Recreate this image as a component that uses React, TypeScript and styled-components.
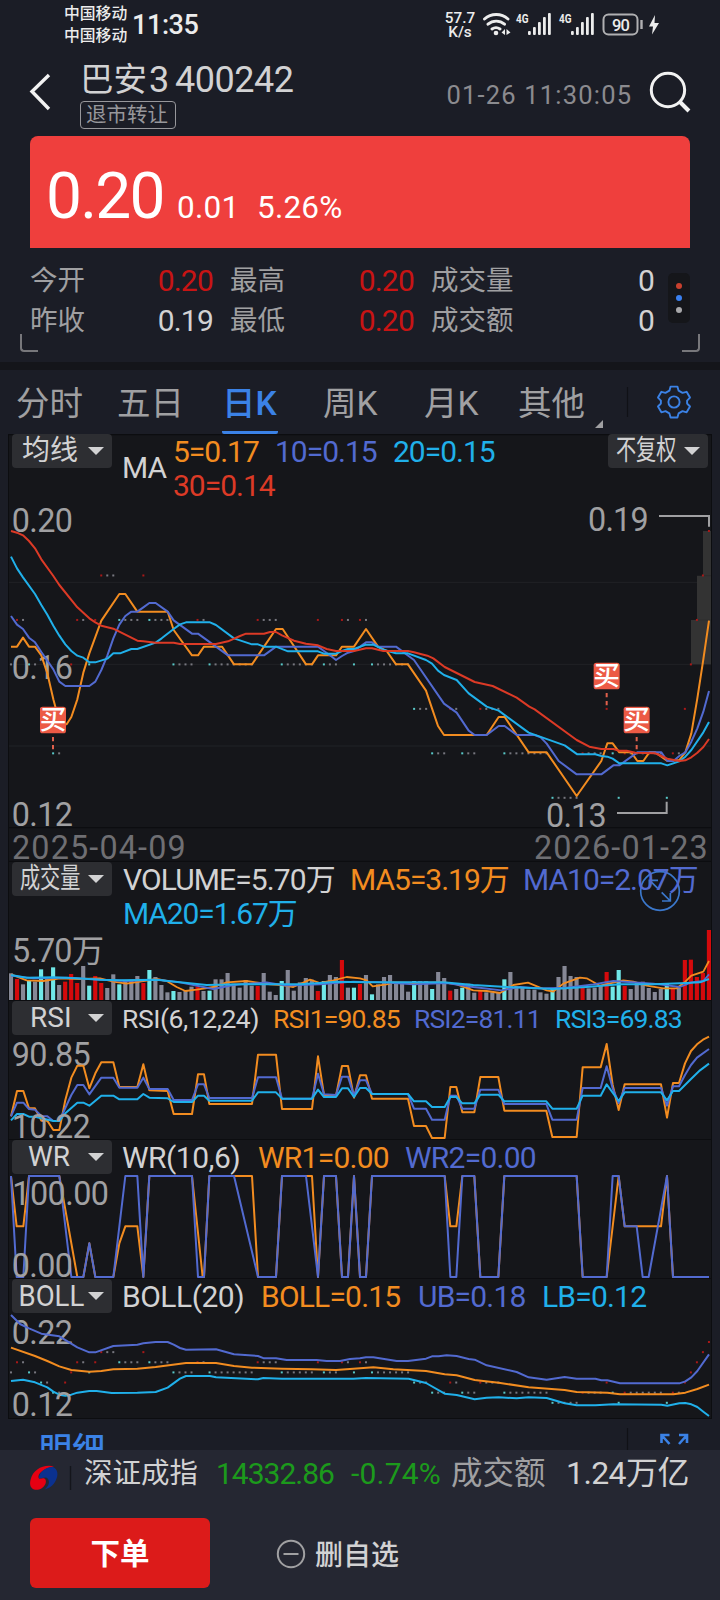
import React from 'react';
import styled, { createGlobalStyle } from 'styled-components';

const FONT = "Roboto, 'Noto Sans CJK SC', sans-serif";
const C = {
  page: '#1b1d26',
  panel: '#15161a',
  line: '#0c0d10',
  grid: '#212226',
  text: '#d2d2d3',
  muted: '#a0a0a2',
  dim: '#6f6f73',
  orange: '#f28c20',
  indigo: '#526ad0',
  cyan: '#20b0ea',
  red: '#dc3a26',
  blue: '#3b82e6',
};

const Global = createGlobalStyle`
  body { margin: 0; background: ${C.page}; }
  * { box-sizing: border-box; }
`;

const Screen = styled.div`
  width: 720px;
  height: 1600px;
  overflow: hidden;
  display: flex;
  flex-direction: column;
  background: ${C.page};
  color: ${C.text};
  font-family: ${FONT};
  white-space: nowrap;
`;

/* A run of text with its own size, tracking and reserved width */
const Txt = styled.span<{ $s: number; $c?: string; $ls?: number; $w?: number; $b?: number }>`
  flex: none;
  display: block;
  font-size: ${p => p.$s}px;
  color: ${p => p.$c ?? 'inherit'};
  letter-spacing: ${p => p.$ls ?? 0}px;
  font-weight: ${p => p.$b ?? 400};
  ${p => (p.$w ? `width: ${p.$w}px;` : '')}
`;

/* ---------- status bar ---------- */
const StatusBar = styled.div`
  height: 60px;
  padding: 0 60px 10px 64px;
  display: flex;
  align-items: center;
  color: #ececec;
`;
const Stack = styled.div<{ $lh: number; $w: number; $align?: string }>`
  display: flex;
  flex-direction: column;
  align-items: ${p => p.$align ?? 'flex-start'};
  width: ${p => p.$w}px;
  line-height: ${p => p.$lh}px;
`;
const StatusIcons = styled.svg`
  display: block;
  margin-left: 7px;
`;

/* ---------- header ---------- */
const Header = styled.header`
  height: 76px;
  padding: 0 29px;
  display: flex;
  align-items: flex-start;
`;
const TitleBlock = styled.div`
  margin-left: 27px;
  width: 367px;
  display: flex;
  flex-direction: column;
  align-items: flex-start;
`;
const TitleLine = styled.div`
  display: flex;
  height: 41px;
  line-height: 40px;
`;
const Badge = styled.div`
  width: 96px;
  height: 28px;
  border: 1px solid #97979b;
  border-radius: 4px;
  color: #97979b;
  font-size: 20.5px;
  line-height: 26px;
  padding-left: 5px;
`;
const TimeStamp = styled.div`
  line-height: 30px;
  margin-top: 20px;
  width: 203px;
`;

/* ---------- quote ---------- */
const QuoteCard = styled.section`
  margin: 0 30px;
  height: 112px;
  padding-left: 16px;
  border-radius: 8px 8px 0 0;
  background: #ef3f3d;
  color: #fff;
  display: flex;
  align-items: baseline;
  line-height: 122px;
`;
const Stats = styled.section`
  position: relative;
  height: 114px;
  padding: 13px 30px 0;
  display: flex;
`;
const StatGrid = styled.div`
  display: grid;
  grid-template-columns: 92px 92px 16px 93px 92px 16px 112px 112px;
  grid-auto-rows: 40px;
  line-height: 40px;
  color: ${C.muted};
`;
const StatValue = styled.span<{ $c?: string }>`
  text-align: right;
  font-size: 30px;
  letter-spacing: -0.8px;
  padding-right: 1px;
  color: ${p => p.$c ?? C.text};
`;
const StatLabel = styled.span`
  font-size: 27.5px;
`;
const DotMenu = styled.div`
  width: 22px;
  height: 50px;
  margin: 12px 0 0 13px;
  border-radius: 5px;
  background: #15161a;
  display: flex;
  flex-direction: column;
  align-items: center;
  justify-content: center;
  gap: 6px;
`;
const Dot = styled.i<{ $c: string }>`
  width: 6px;
  height: 6px;
  border-radius: 50%;
  background: ${p => p.$c};
`;
const Corner = styled.i<{ $side: 'left' | 'right' }>`
  position: absolute;
  bottom: 10px;
  ${p => p.$side}: 20px;
  width: 18px;
  height: 18px;
  border: 0 solid #77777b;
  border-bottom-width: 2px;
  border-${p => p.$side}-width: 2px;
  border-bottom-${p => p.$side}-radius: 4px;
`;
const Band = styled.div`
  height: 8px;
  flex: none;
  background: #14151a;
`;

/* ---------- tabs ---------- */
const Tabs = styled.nav`
  height: 64px;
  display: flex;
  padding-left: 16px;
  line-height: 67px;
  font-size: 33.5px;
  color: ${C.muted};
`;
const Tab = styled.div<{ $w: number; $on?: boolean }>`
  width: ${p => p.$w}px;
  flex: none;
  color: ${p => (p.$on ? C.blue : 'inherit')};
  font-weight: ${p => (p.$on ? 500 : 400)};
`;
const TabMark = styled.span`
  display: block;
  width: 56px;
  height: 64px;
  border-bottom: 3px solid ${C.blue};
  border-radius: 2px;
`;
const TabTools = styled.svg`
  display: block;
  flex: none;
`;

/* ---------- chart panes ---------- */
const Panel = styled.main`
  margin: 0 8px;
  border: 1px solid ${C.line};
  border-top: 0;
  background: ${C.panel};
  height: 985px;
  flex: none;
`;
const Pane = styled.section<{ $h: number }>`
  display: grid;
  height: ${p => p.$h}px;
  > * { grid-area: 1 / 1; }
`;
const Plot = styled.svg`
  display: block;
  width: 702px;
  height: 100%;
`;
const PaneHead = styled.div`
  z-index: 1;
  height: 68px;
  padding: 0 3px;
  display: flex;
  align-items: flex-start;
`;
const Pill = styled.button`
  flex: none;
  width: 100px;
  height: 34px;
  padding: 0;
  border: 0;
  border-radius: 4px;
  background: #2d2e32;
  color: ${C.text};
  font-family: inherit;
  line-height: 34px;
  display: flex;
  align-items: center;
`;
const PillText = styled.span<{ $x: number; $l: number; $s?: number }>`
  display: block;
  width: 76px;
  flex: none;
  padding-left: ${p => p.$l}px;
  text-align: left;
  font-size: ${p => p.$s ?? 28}px;
  line-height: 34px;
  transform: scaleX(${p => p.$x});
  transform-origin: left center;
`;
const Caret = styled.i`
  border: 8px solid transparent;
  border-top: 8px solid ${C.text};
  border-bottom: 0;
`;
const Readouts = styled.div<{ $l: number; $w: number; $t?: number }>`
  margin-left: ${p => p.$l}px;
  width: ${p => p.$w}px;
  flex: none;
  padding-top: ${p => p.$t ?? 1}px;
  display: flex;
  flex-wrap: wrap;
  line-height: 34px;
`;
const Spacer = styled.div`
  flex: 1;
`;

const STEP = 18.05;
const bx = (i: number) => 33 + STEP * i;
const TONE: Record<string, string> = { r: '#a81818', g: '#77777f', t: '#58c8c8' };
const BAR: Record<string, string> = { r: '#d40a0c', g: '#868896', t: '#70e8e8' };

/* closing levels: price level, first bar, tone of each bar in the run */
const CLOSES: [number, number, string][] = [
  [0, 116, 'r'], [1, 15, 'rgg'], [1, 22, 'r'], [1, 115, 'r'],
  [2, 1, 'rg'], [2, 11, 'rg'], [2, 14, 'r'], [2, 18, 'tggg'], [2, 23, 'tggg'], [2, 31, 'rg'], [2, 41, 'rggg'],
  [2, 51, 'r'], [2, 55, 'rg'], [2, 58, 'rg'], [2, 114, 'r'],
  [3, 0, 'g'], [3, 3, 'tg'], [3, 10, 'r'], [3, 13, 't'], [3, 27, 'tggg'], [3, 33, 'tggggggg'], [3, 45, 'tggggg'],
  [3, 52, 'tgg'], [3, 57, 't'], [3, 60, 'tgggggg'], [3, 113, 'r'],
  [4, 5, 'tg'], [4, 9, 'r'], [4, 67, 'tgg'], [4, 73, 'rg'], [4, 78, 'rggg'], [4, 99, 'r'], [4, 112, 'r'],
  [5, 7, 'tg'], [5, 70, 'tgg'], [5, 75, 'tgg'], [5, 82, 'tggggggg'], [5, 95, 'rggg'], [5, 100, 't'],
  [5, 102, 'rgggggg'], [5, 110, 'rg'],
  [6, 90, 'tgggg'], [6, 101, 't'], [6, 109, 't'],
];
const Closes = ({ top, step }: { top: number; step: number }) => (
  <g>
    {CLOSES.flatMap(([lv, s, run]) =>
      run.split('').map((t, k) => (
        <rect key={`${lv}-${s + k}`} x={bx(s + k) - 3} y={top + lv * step - 3} width={6} height={6} fill={TONE[t]} />
      )),
    )}
  </g>
);

const VOLUME =
  'g355 r372 g388 t375 g380 t343 g372 t337 g390 r380 r357 r384 g333 t392 r363 r384 g399 g358 t388 g376 g375 g363 r384 t345 g366 g390 g412 t408 g411 g405 g395 r395 g408 t407 g373 g373 g354 g386 g398 g375 g392 r393 g354 g410 g420 t378 g345 g407 g382 g369 g374 r408 t378 g360 g366 r315 g398 t398 r387 g360 t418 g388 g366 g360 g385 g386 g410 t378 g378 g378 t402 g351 g369 r407 g402 t398 g386 g413 r408 g412 g412 g412 t373 g351 g393 g396 g404 g404 g412 g416 t402 g366 g333 g363 g366 r398 g400 g398 g391 r351 t395 t345 r393 g402 g382 g380 g399 g411 g402 t387 r400 g398 r315 r314 r366 r354 r225'.split(' ');

const Line = ({ c, d, w = 6 }: { c: string; d: string; w?: number }) => (
  <polyline points={d} fill="none" stroke={c} strokeWidth={w} strokeLinejoin="round" />
);
const T = ({ x, y, w, c = C.muted, children }: { x: number; y: number; w: number; c?: string; children: string }) => (
  <text x={x} y={y} textLength={w} fill={c} fontSize={97} fontFamily={FONT}>{children}</text>
);
const Buy = ({ x, y }: { x: number; y: number }) => (
  <g>
    <path d={`M${x} ${y + 91}v38`} stroke="#e0604c" strokeWidth={6} strokeDasharray="13 11" />
    <rect x={x - 39} y={y} width={78} height={80} rx={8} fill="#ec5a45" />
    <text x={x} y={y + 68} textAnchor="middle" fontSize={80} fontWeight={500} fill="#fff" fontFamily={FONT}>买</text>
  </g>
);

const MainPlot = () => (
  <Plot viewBox="27 -198 2106 1284">
    <path d="M27 247H2133M27 493H2133M27 738H2133" stroke={C.grid} strokeWidth={3} />
    <path d="M27 -196H2133M27 983H2133M27 1084H2133" stroke={C.line} strokeWidth={4} />
    <path d="M2073 360h18V227h18V93h27v400h-63z" fill="#333333" />
    <path d="M2109 227h27M2091 360h45" stroke="#2b2b2b" strokeWidth={2} />
    <Closes top={93} step={133.4} />
    <T x={35} y={95} w={184}>0.20</T>
    <T x={35} y={536} w={184}>0.16</T>
    <T x={35} y={977} w={184}>0.12</T>
    <Line c={C.orange} d="33,440 51,440 69,413 87,440 105,440 124,466 142,520 160,598 178,665 200,673 214,651 232,598 250,518 268,460 304,362 358,282 376,282 412,335 503,335 521,390 576,466 594,466 612,440 666,440 702,493 756,493 828,387 848,387 918,493 936,493 954,466 1008,466 1026,440 1062,440 1098,387 1134,440 1160,453 1188,493 1224,493 1278,572 1296,625 1314,678 1332,705 1460,705 1496,651 1514,651 1586,757 1640,757 1730,888 1804,783 1822,730 1838,730 1858,757 1894,757 1912,783 1930,783 1948,757 1966,757 2002,783 2038,780 2056,757 2074,700 2092,595 2110,478 2127,362" />
    <Line c={C.indigo} d="33,348 51,374 69,387 87,413 105,427 124,456 160,508 178,545 196,558 268,558 286,545 304,510 322,467 340,415 358,374 376,348 394,335 412,335 430,322 448,309 467,309 503,335 521,361 576,401 594,401 684,466 792,466 828,440 954,440 972,453 990,466 1008,480 1026,468 1044,458 1062,453 1098,427 1116,427 1134,440 1188,440 1242,480 1332,611 1370,638 1406,692 1424,705 1460,705 1496,678 1514,678 1550,705 1604,705 1622,712 1640,731 1676,783 1730,823 1804,823 1840,796 1858,796 1912,757 1984,757 2002,783 2020,783 2038,768 2056,757 2074,725 2092,685 2110,635 2127,573" />
    <Line c={C.cyan} d="33,170 51,205 69,232 105,282 124,315 142,344 160,377 178,407 196,433 214,453 232,467 250,473 268,487 286,487 322,476 340,460 360,460 394,447 412,447 467,428 485,415 521,387 540,373 558,367 630,367 648,375 702,415 756,433 774,433 792,440 828,440 864,454 954,454 972,461 1008,461 1026,453 1044,447 1062,447 1098,434 1120,434 1150,449 1188,460 1224,460 1278,480 1296,491 1314,512 1332,525 1370,540 1406,580 1460,620 1496,632 1586,698 1694,736 1732,763 1786,763 1804,768 1822,770 1838,776 1858,790 1984,790 2002,796 2038,784 2056,770 2074,750 2110,697 2127,666" />
    <Line c={C.red} d="33,93 51,98 69,106 87,123 105,145 124,178 160,228 178,255 232,322 250,338 268,355 286,367 304,377 340,386 412,422 430,424 467,428 521,428 540,432 648,432 684,424 720,408 738,401 792,401 810,396 828,396 846,406 882,422 918,431 954,436 980,447 1008,453 1062,453 1098,445 1116,445 1150,453 1224,453 1242,457 1282,467 1300,475 1334,501 1424,546 1478,558 1550,593 1588,620 1604,628 1730,720 1768,740 1804,747 1840,747 1858,752 1880,752 1906,758 1966,760 1984,768 2002,776 2038,783 2056,781 2074,772 2092,758 2110,741 2127,717" />
    <Buy x={159} y={620} />
    <Buy x={1820} y={488} />
    <Buy x={1910} y={620} />
    <path d="M1977 48H2127V80M1851 939H2000V905" fill="none" stroke={C.muted} strokeWidth={6} />
    <T x={1764} y={92} w={182}>0.19</T>
    <T x={1638} y={980} w={182}>0.13</T>
    <T x={36} y={1076} w={521} c={C.dim}>2025-04-09</T>
    <T x={1602} y={1076} w={521} c={C.dim}>2026-01-23</T>
  </Plot>
);

const VolumePlot = () => (
  <Plot viewBox="27 21 2106 417">
    {VOLUME.map((b, i) => (
      <rect key={i} x={bx(i) - 6.2} y={+b.slice(1)} width={12.4} height={435 - +b.slice(1)} fill={BAR[b[0]]} />
    ))}
    <Line c={C.orange} w={5.4} d="33,358 80,376 130,378 180,370 240,372 300,370 340,380 380,386 430,378 470,372 500,378 530,396 556,408 590,404 640,396 680,382 740,378 780,384 810,388 846,390 880,396 930,374 960,384 1000,376 1040,366 1080,370 1100,376 1118,394 1160,388 1180,382 1240,384 1330,382 1370,388 1420,406 1460,408 1500,414 1540,390 1584,383 1640,406 1660,410 1690,386 1740,368 1760,370 1800,392 1870,376 1900,380 1940,392 1990,400 2030,400 2056,380 2074,362 2110,350 2127,318" />
    <Line c={C.indigo} w={5.4} d="33,362 100,370 200,368 300,374 380,378 470,374 540,382 640,402 700,390 800,382 860,392 960,388 1060,380 1150,382 1240,388 1340,384 1420,396 1504,406 1560,396 1620,400 1700,398 1780,388 1840,378 1960,386 2040,396 2074,382 2110,378 2127,358" />
    <Line c={C.cyan} d="33,360 80,368 160,367 230,370 300,374 360,376 470,374 540,382 620,390 720,388 820,388 900,388 960,384 1010,380 1100,382 1240,382 1330,382 1420,390 1520,396 1660,402 1760,396 1860,388 1960,388 2060,384 2100,382 2127,372" />
    <T x={36} y={320} w={276}>5.70万</T>
    <g fill="none" stroke="#3b78cc" strokeWidth={5}>
      <circle cx={1980} cy={108} r={58} />
      <path d="M1974 101L1949 76M1948 98V76H1974M1985 112L2011 138M1986 138H2011V114" />
    </g>
    <path d="M27 437H2133" stroke={C.line} strokeWidth={4} />
  </Plot>
);

const RsiPlot = () => (
  <Plot viewBox="27 438 2106 417">
    <T x={35} y={632} w={237}>90.85</T>
    <Line c={C.orange} d="33,784 51,708 70,708 87,760 105,760 124,797 142,797 160,825 178,825 196,735 214,668 232,632 250,632 268,700 286,655 304,622 340,622 358,696 412,696 430,628 448,706 503,708 521,777 576,777 594,658 612,658 628,747 756,747 774,599 828,599 846,762 936,762 954,604 972,720 1008,722 1026,633 1044,633 1062,728 1080,661 1098,661 1116,731 1224,731 1242,813 1278,813 1296,849 1334,849 1351,696 1369,696 1387,772 1423,772 1441,666 1495,666 1513,767 1639,767 1657,846 1730,846 1748,637 1802,637 1820,567 1838,690 1856,765 1874,688 1983,688 2001,788 2019,684 2037,684 2055,625 2073,588 2091,568 2109,554 2127,545" />
    <Line c={C.indigo} d="33,784 51,743 70,743 87,762 105,764 124,783 142,784 160,798 178,798 214,720 232,690 250,690 268,718 304,668 340,668 358,698 412,698 430,668 448,702 503,702 521,735 576,735 594,688 612,688 628,729 756,729 774,667 828,667 846,731 936,731 954,656 972,718 1008,720 1026,665 1044,665 1062,722 1080,676 1098,676 1116,717 1224,717 1242,761 1278,761 1296,794 1334,794 1351,722 1369,722 1387,761 1423,761 1441,704 1495,704 1513,747 1639,747 1657,794 1730,794 1748,699 1802,699 1820,634 1838,700 1856,744 1874,699 1983,699 2001,752 2019,694 2037,694 2055,660 2073,630 2091,608 2127,582" />
    <Line c={C.cyan} d="33,796 51,777 70,777 87,785 105,785 160,798 178,798 196,775 232,743 250,743 268,752 304,722 340,722 358,733 412,733 430,717 448,728 503,730 521,741 576,741 594,722 612,722 628,737 756,737 774,712 828,712 846,731 936,731 954,704 972,726 1008,726 1026,700 1044,700 1062,726 1080,699 1098,699 1116,717 1224,717 1242,739 1278,739 1296,756 1334,756 1351,726 1369,726 1387,745 1423,745 1441,719 1495,719 1513,739 1639,739 1657,761 1730,761 1748,722 1802,722 1820,688 1856,738 1874,712 1983,712 2001,736 2019,708 2037,708 2073,672 2100,646 2127,626" />
    <T x={35} y={849} w={237}>10.22</T>
    <path d="M27 854H2133" stroke={C.line} strokeWidth={4} />
  </Plot>
);

const WrPlot = () => (
  <Plot viewBox="27 15 2106 417">
    <Line c={C.orange} d="33,123 50,274 70,274 87,123 178,123 232,426 250,426 268,325 286,426 340,426 358,325 376,274 412,274 430,426 448,123 576,123 608,426 612,426 628,123 756,123 774,426 828,426 846,123 936,123 954,426 972,123 1008,123 1026,426 1044,426 1062,123 1080,426 1098,426 1116,123 1334,123 1351,274 1369,274 1387,123 1423,123 1441,426 1495,426 1513,123 1730,123 1748,426 1820,426 1856,123 1874,274 1983,274 2001,123 2019,426 2127,426" />
    <Line c={C.indigo} d="33,123 50,426 70,426 87,123 178,123 214,426 250,426 268,325 286,426 340,426 376,123 412,123 430,426 448,123 576,123 594,426 612,426 628,123 702,123 774,426 828,426 846,123 918,123 954,426 972,123 1008,123 1026,426 1044,426 1062,123 1080,426 1098,426 1116,123 1334,123 1351,426 1369,426 1387,123 1423,123 1441,426 1495,426 1513,123 1730,123 1748,426 1820,426 1838,123 1856,123 1874,274 1910,274 1928,426 1946,426 2001,123 2019,426 2127,426" />
    <T x={37} y={210} w={290}>100.00</T>
    <T x={35} y={426} w={184}>0.00</T>
    <path d="M27 431H2133" stroke={C.line} strokeWidth={3} />
  </Plot>
);

const BollPlot = () => (
  <Plot viewBox="27 432 2106 417">
    <T x={35} y={627} w={184}>0.22</T>
    <Closes top={621} step={30.4} />
    <Line c={C.indigo} d="33,540 60,567 87,580 124,596 178,604 232,637 268,652 286,652 340,633 412,629 430,625 467,621 503,621 521,629 540,639 558,644 648,643 702,658 774,663 792,670 828,670 860,675 950,675 980,678 1020,678 1050,672 1080,670 1098,667 1120,667 1190,678 1224,678 1278,671 1296,664 1316,664 1340,661 1370,663 1406,672 1424,674 1460,691 1550,711 1586,727 1640,734 1694,726 1730,731 1786,731 1804,736 1822,736 1860,745 2038,745 2056,739 2074,727 2092,708 2127,658" />
    <Line c={C.orange} d="33,638 105,663 142,678 178,694 214,705 268,710 304,708 340,703 412,701 467,696 558,684 648,684 702,693 756,698 846,701 936,703 1008,705 1060,701 1120,697 1180,703 1278,708 1334,718 1370,721 1424,735 1496,743 1586,757 1694,765 1730,771 1822,773 1860,778 2020,778 2056,773 2092,762 2127,749" />
    <Line c={C.cyan} d="33,738 69,734 105,742 142,757 160,770 178,779 196,782 214,779 232,773 268,768 290,768 335,774 412,773 467,771 503,758 540,731 558,723 630,723 648,727 774,733 790,729 846,731 1060,731 1098,729 1226,731 1278,744 1334,776 1370,780 1424,793 1460,788 1496,787 1550,790 1586,787 1640,789 1694,805 1730,811 1786,811 1840,808 1984,809 2002,812 2038,805 2056,804 2074,808 2092,816 2110,830 2127,843" />
    <T x={35} y={843} w={184}>0.12</T>
  </Plot>
);

/* ---------- footer ---------- */
const Details = styled.div`
  height: 31px;
  flex: none;
  overflow: hidden;
  padding: 10px 29px 0 39px;
  display: flex;
  justify-content: space-between;
  color: ${C.blue};
  line-height: 41px;
`;
const ExpandIcon = styled.svg`
  display: block;
  flex: none;
  margin-top: -1px;
`;
const Footer = styled.footer`
  height: 150px;
  flex: none;
  background: #252732;
`;
const IndexRow = styled.div`
  height: 68px;
  padding-left: 30px;
  display: flex;
  line-height: 47px;
`;
const IndexMark = styled.svg`
  display: block;
  flex: none;
`;
const Actions = styled.div`
  padding-left: 30px;
  display: flex;
  align-items: center;
  height: 70px;
`;
const OrderButton = styled.button`
  width: 180px;
  height: 70px;
  padding: 2px 0 0;
  border: 0;
  border-radius: 6px;
  background: #dc1b1a;
  color: #fff;
  font: 700 29.5px/68px ${FONT};
`;

export default function App() {
  return (
    <Screen>
      <Global />
      <StatusBar>
        <Stack $lh={22} $w={68}>
          <Txt $s={15.8} $b={500}>中国移动</Txt>
          <Txt $s={15.8} $b={500}>中国移动</Txt>
        </Stack>
        <Txt $s={27} $b={500} $ls={-0.4}>11:35</Txt>
        <Spacer />
        <Stack $lh={14} $w={30} $align="center">
          <Txt $s={15.3} $b={500}>57.7</Txt>
          <Txt $s={15.3} $b={500}>K/s</Txt>
        </Stack>
        <StatusIcons width={178} height={30} viewBox="482 10 178 30">
          <g fill="none" stroke="#ececec" strokeWidth={2.9} strokeLinecap="round">
            <path d="M484.500 19a17.500 17.500 0 0 1 23.500 0M488 24.200a12.500 12.500 0 0 1 16.500 0M492 29a7 7 0 0 1 8 0" />
          </g>
          <circle cx={496} cy={33} r={2.300} fill="#ececec" />
          <path d="M501.500 32.500l3.500-3.500v6zM510.500 32.500l-4-3.500v6z" fill="#ececec" />
          {[516, 559].map(x => (
            <g key={x} fill="#ececec">
              <text x={x} y={23} fontSize={13} fontWeight={700} textLength={12.500} lengthAdjust="spacingAndGlyphs" fontFamily={FONT}>4G</text>
              <rect x={x + 12} y={31} width={2.800} height={4} rx={1} />
              <rect x={x + 17} y={27} width={2.800} height={8} rx={1} />
              <rect x={x + 22} y={22} width={2.800} height={13} rx={1} />
              <rect x={x + 27} y={17} width={2.800} height={18} rx={1} />
              <rect x={x + 32} y={13} width={2.800} height={22} rx={1} />
            </g>
          ))}
          <rect x={603.500} y={14.500} width={34} height={20} rx={5} fill="none" stroke="#b0b0b2" strokeWidth={2} />
          <path d="M641.500 20v9" stroke="#b0b0b2" strokeWidth={2.400} />
          <text x={612} y={30.500} fontSize={16.500} fontWeight={500} fill="#ececec" textLength={18} fontFamily={FONT}>90</text>
          <path d="M655 15l-6 11.500h4l-1 8 7-11.500h-4.500z" fill="#ececec" />
        </StatusIcons>
      </StatusBar>

      <Header>
        <svg width={24} height={60} viewBox="29 60 24 60">
          <path d="M49 75L32 91.500L49 109" fill="none" stroke="#f2f2f2" strokeWidth={3.400} />
        </svg>
        <TitleBlock>
          <TitleLine>
            <Txt $s={33.5} $w={69}>巴安</Txt>
            <Txt $s={36} $w={26}>3</Txt>
            <Txt $s={36} $ls={-0.5}>400242</Txt>
          </TitleLine>
          <Badge>退市转让</Badge>
        </TitleBlock>
        <TimeStamp><Txt $s={25.5} $c="#8b8b8f" $ls={1.2}>01-26 11:30:05</Txt></TimeStamp>
        <svg width={42} height={60} viewBox="649 60 42 60">
          <circle cx={668} cy={90} r={16.700} fill="none" stroke="#f2f2f2" strokeWidth={3} />
          <path d="M679.500 101.500l9.500 9.500" stroke="#f2f2f2" strokeWidth={4} />
        </svg>
      </Header>

      <QuoteCard>
        <Txt $s={64} $ls={-1.8} $w={131}>0.20</Txt>
        <Txt $s={31.5} $ls={0.3} $w={80}>0.01</Txt>
        <Txt $s={31.5} $ls={0.2}>5.26%</Txt>
      </QuoteCard>
      <Stats>
        <StatGrid>
          <StatLabel>今开</StatLabel><StatValue $c="#c81414">0.20</StatValue><i />
          <StatLabel>最高</StatLabel><StatValue $c="#c81414">0.20</StatValue><i />
          <StatLabel>成交量</StatLabel><StatValue>0</StatValue>
          <StatLabel>昨收</StatLabel><StatValue>0.19</StatValue><i />
          <StatLabel>最低</StatLabel><StatValue $c="#c81414">0.20</StatValue><i />
          <StatLabel>成交额</StatLabel><StatValue>0</StatValue>
        </StatGrid>
        <DotMenu>
          <Dot $c="#c8402e" />
          <Dot $c="#3a80f0" />
          <Dot $c="#a8a8aa" />
        </DotMenu>
        <Corner $side="left" />
        <Corner $side="right" />
      </Stats>
      <Band />

      <Tabs>
        <Tab $w={101}>分时</Tab>
        <Tab $w={105}>五日</Tab>
        <Tab $w={101} $on><TabMark>日K</TabMark></Tab>
        <Tab $w={101}>周K</Tab>
        <Tab $w={94}>月K</Tab>
        <Tab $w={74}>其他</Tab>
        <TabTools width={118} height={64} viewBox="592 370 118 64">
          <path d="M603 420v8h-8z" fill={C.muted} />
          <path d="M627.500 387v30" stroke="#101116" strokeWidth={1.200} />
          <g fill="none" stroke={C.blue} strokeWidth={1.900} strokeLinejoin="round">
            <circle cx={674} cy={402} r={5.600} />
            <path d="M670.600 386.600h6.800l1.200 4.100 3.900 2.200 4.100-1.100 3.400 5.800-2.900 3v2.900l2.900 3-3.400 5.800-4.100-1.100-3.900 2.200-1.200 4.100h-6.800l-1.200-4.100-3.900-2.200-4.100 1.100-3.400-5.800 2.900-3v-2.900l-2.900-3 3.400-5.800 4.100 1.100 3.900-2.200z" />
          </g>
        </TabTools>
      </Tabs>

      <Panel>
        <Pane $h={428}>
          <MainPlot />
          <PaneHead>
            <Pill><PillText $l={10} $x={1}>均线</PillText><Caret /></Pill>
            <Readouts $l={10} $w={51} $t={17}><Txt $s={30} $ls={-1}>MA</Txt></Readouts>
            <Readouts $l={0} $w={340}>
              <Txt $s={30} $ls={-1} $w={102} $c={C.orange}>5=0.17</Txt>
              <Txt $s={30} $ls={-1} $w={118} $c={C.indigo}>10=0.15</Txt>
              <Txt $s={30} $ls={-1} $w={115} $c={C.cyan}>20=0.15</Txt>
              <Txt $s={30} $ls={-1} $c={C.red}>30=0.14</Txt>
            </Readouts>
            <Spacer />
            <Pill><PillText $l={11} $x={0.72}>不复权</PillText><Caret /></Pill>
          </PaneHead>
        </Pane>
        <Pane $h={139}>
          <VolumePlot />
          <PaneHead>
            <Pill><PillText $l={11} $x={0.72}>成交量</PillText><Caret /></Pill>
            <Readouts $l={11} $w={588}>
              <Txt $s={30} $ls={-0.9} $w={227}>VOLUME=5.70万</Txt>
              <Txt $s={30} $ls={-1} $w={173} $c={C.orange}>MA5=3.19万</Txt>
              <Txt $s={30} $ls={-1} $w={185} $c={C.indigo}>MA10=2.07万</Txt>
              <Txt $s={30} $ls={-1.1} $c={C.cyan}>MA20=1.67万</Txt>
            </Readouts>
          </PaneHead>
        </Pane>
        <Pane $h={139}>
          <RsiPlot />
          <PaneHead>
            <Pill><PillText $l={18} $x={1}>RSI</PillText><Caret /></Pill>
            <Readouts $l={10} $w={588}>
              <Txt $s={26.5} $ls={-0.45} $w={151}>RSI(6,12,24)</Txt>
              <Txt $s={26.5} $ls={-0.85} $w={141} $c={C.orange}>RSI1=90.85</Txt>
              <Txt $s={26.5} $ls={-0.85} $w={141} $c={C.indigo}>RSI2=81.11</Txt>
              <Txt $s={26.5} $ls={-0.85} $c={C.cyan}>RSI3=69.83</Txt>
            </Readouts>
          </PaneHead>
        </Pane>
        <Pane $h={139}>
          <WrPlot />
          <PaneHead>
            <Pill><PillText $l={16} $x={1}>WR</PillText><Caret /></Pill>
            <Readouts $l={10} $w={588}>
              <Txt $s={30} $ls={-0.5} $w={136}>WR(10,6)</Txt>
              <Txt $s={30} $ls={-0.75} $w={147} $c={C.orange}>WR1=0.00</Txt>
              <Txt $s={30} $ls={-0.75} $c={C.indigo}>WR2=0.00</Txt>
            </Readouts>
          </PaneHead>
        </Pane>
        <Pane $h={139}>
          <BollPlot />
          <PaneHead>
            <Pill><PillText $l={7} $x={0.92} $s={30}>BOLL</PillText><Caret /></Pill>
            <Readouts $l={10} $w={588}>
              <Txt $s={30} $ls={-0.5} $w={139}>BOLL(20)</Txt>
              <Txt $s={30} $ls={-0.8} $w={157} $c={C.orange}>BOLL=0.15</Txt>
              <Txt $s={30} $ls={-0.8} $w={124} $c={C.indigo}>UB=0.18</Txt>
              <Txt $s={30} $ls={-0.8} $c={C.cyan}>LB=0.12</Txt>
            </Readouts>
          </PaneHead>
        </Pane>
      </Panel>

      <Details>
        <Txt $s={33} $b={500}>明细</Txt>
        <ExpandIcon width={66} height={30} viewBox="625 1428 66 30">
          <path d="M627.500 1428v30" stroke="#101116" strokeWidth={1.200} />
          <path d="M661.500 1443v-8h8M661.500 1435l8 9M687 1443v-8h-8M687 1435l-8 9" fill="none" stroke={C.blue} strokeWidth={2.600} />
        </ExpandIcon>
      </Details>

      <Footer>
        <IndexRow>
          <IndexMark width={54} height={60} viewBox="30 1450 54 60">
            <path d="M54 1466.500C44 1464 33 1469 30.500 1480C28.500 1488 34 1491 39 1489.500C44 1488 47 1483 45.500 1479.500C44 1477 41 1479 39 1478.500C36 1474 46 1467 54 1466.500Z" fill="#e60012" />
            <path d="M39 1478.500C38 1473 46 1466.500 53 1467C58 1469 58.500 1475 56 1480C53.500 1485.500 49 1488.500 44.500 1489.500C49 1486 50 1482 48 1479C46 1476 42 1478.500 39 1478.500Z" fill="#0b318f" />
            <path d="M70.500 1466v24" stroke="#14151b" strokeWidth={1.400} />
          </IndexMark>
          <Txt $s={28.5} $w={132}>深证成指</Txt>
          <Txt $s={30} $ls={-1} $w={135} $c="#1c9a1c">14332.86</Txt>
          <Txt $s={30} $ls={0.2} $w={100} $c="#1c9a1c">-0.74%</Txt>
          <Txt $s={31.5} $w={115} $c={C.muted}>成交额</Txt>
          <Txt $s={32} $ls={-0.6}>1.24万亿</Txt>
        </IndexRow>
        <Actions>
          <OrderButton>下单</OrderButton>
          <svg width={105} height={40} viewBox="210 1534 105 40">
            <g fill="none" stroke={C.muted} strokeWidth={2}>
              <circle cx={291} cy={1555} r={13.200} />
              <path d="M283.500 1555h15" />
            </g>
          </svg>
          <Txt $s={28} $b={500}>删自选</Txt>
        </Actions>
      </Footer>
    </Screen>
  );
}
